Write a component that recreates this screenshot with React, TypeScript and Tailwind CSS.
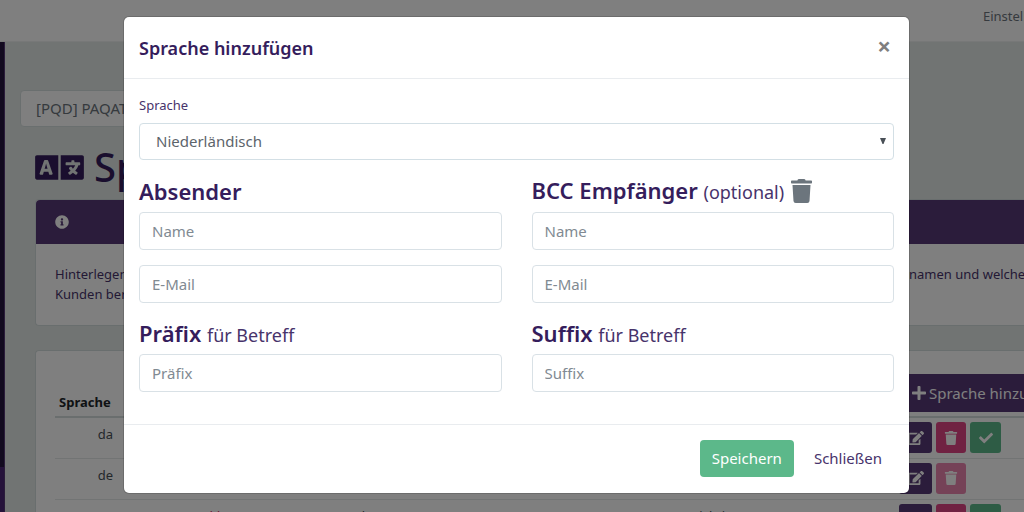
import React, { useState } from 'react';
import { FaCheck, FaEdit, FaInfoCircle, FaLanguage, FaPlus, FaTrash } from 'react-icons/fa';

interface LanguageRow {
  code: string;
  marker?: string;
  sender?: string;
  prefix?: string;
  locked?: boolean;
}

interface FieldProps {
  id: string;
  placeholder: string;
  type?: string;
}

const rows: LanguageRow[] = [
  { code: 'da' },
  { code: 'de', locked: true },
  { code: 'en', marker: '**', sender: 'PAQATO sample Contact', prefix: '[Wichtig]' },
];

const Field: React.FC<FieldProps> = ({ id, placeholder, type = 'text' }) => (
  <input id={id} type={type} placeholder={placeholder} aria-label={placeholder}
    className="block w-full h-[38px] px-3 rounded border border-[#d9e1e6] bg-white text-[15px] text-[#495057] placeholder:text-[#818a92] outline-none" />
);

const LanguageTable: React.FC = () => (
  <table className="w-full table-fixed border-collapse text-[13px] leading-5 text-[#495057]">
    <colgroup>
      <col className="w-[64px]" />
      <col className="w-[152px]" />
      <col className="w-[408px]" />
      <col />
      <col className="w-[125px]" />
    </colgroup>
    <thead>
      <tr className="border-b-2 border-[#d5dcdc] h-12">
        <th className="px-1 pb-1 align-bottom text-left font-bold text-[#212529]">Sprache</th>
        <th />
        <th />
        <th />
        <th className="py-1 font-normal">
          <button className="flex items-center gap-0.5 w-[200px] h-[38px] pl-3 rounded bg-[#563876] text-[15px] text-white whitespace-nowrap">
            <FaPlus className="text-base" /> Sprache hinzufügen
          </button>
        </th>
      </tr>
    </thead>
    <tbody>
      {rows.map(r => (
        <tr key={r.code} className="border-b border-[#e4e8e8] h-[41px]">
          <td className="pt-1.5 pr-1.5 align-top text-right">{r.code}</td>
          <td className="pt-1.5 pl-10 align-top text-center text-[#d6336c]">{r.marker}</td>
          <td className="pt-1.5 pl-1 align-top">{r.sender}</td>
          <td className="pt-1.5 pl-1 align-top">{r.prefix}</td>
          <td className="pt-1 align-top">
            <div className="flex gap-1">
              <button aria-label="Bearbeiten" className="flex items-center justify-center w-[33px] h-[31px] rounded-[3px] bg-[#563876] text-white">
                <FaEdit className="text-base" />
              </button>
              <button aria-label="Löschen" disabled={r.locked}
                className={`flex items-center justify-center w-[30px] h-[31px] rounded-[3px] bg-[#e04484] text-white ${r.locked ? 'opacity-65' : ''}`}>
                <FaTrash className="text-sm" />
              </button>
              {!r.locked && (
                <button aria-label="Aktivieren" className="flex items-center justify-center w-[31px] h-[31px] rounded-[3px] bg-[#5cb88a] text-white">
                  <FaCheck className="text-sm" />
                </button>
              )}
            </div>
          </td>
        </tr>
      ))}
    </tbody>
  </table>
);

const SettingsPage: React.FC = () => (
  <div className="flex flex-col h-full">
    <header className="flex justify-end h-[42px] shrink-0 border-b border-[#eef0f0] bg-white">
      <a href="#einstellungen" className="w-[41px] pt-1.5 text-[13px] leading-5 text-[#6c757d] whitespace-nowrap">Einstellungen</a>
    </header>
    <div className="flex flex-1 min-h-0">
      <aside className="flex flex-col w-[5px] shrink-0 border-r border-[#563876] bg-[#24143f]">
        <div className="mt-auto h-[45px] bg-[#4a2474]" />
      </aside>
      <main className="flex-1 min-w-0 pt-12 pl-[15px]">
        <button className="flex items-center w-60 h-[37px] px-[15px] rounded border border-[#d5dfdf] bg-white text-[15px] text-[#6c757d]">
          [PQD] PAQATO
        </button>
        <div className="pl-[15px]">
          <h1 className="flex items-center gap-2.5 h-[72px] pt-2 text-[40px] font-medium text-[#351d5c]">
            <FaLanguage className="w-[49px] h-[39px]" /> Sprachen
          </h1>
          <section className="rounded-l border border-r-0 border-[#d3dcdc] bg-white">
            <div className="flex items-center h-11 px-[19px] rounded-tl bg-[#563876] text-white">
              <FaInfoCircle className="text-sm" />
            </div>
            <div className="h-[81px] px-[19px] pt-5 text-[13px] leading-5 text-[#47336b]">
              <p className="flex justify-between whitespace-nowrap">
                <span>Hinterlegen</span>
                <span className="w-24">namen und welchen</span>
              </p>
              <p>Kunden bereits</p>
            </div>
          </section>
          <section className="mt-6 rounded-l border border-r-0 border-[#d3dcdc] bg-white pl-[19px] pt-[18px]">
            <LanguageTable />
          </section>
        </div>
      </main>
    </div>
  </div>
);

const LanguageDialog: React.FC = () => {
  const [language, setLanguage] = useState('nl');

  return (
    <div role="dialog" aria-labelledby="dialog-title"
      className="w-full rounded-[5px] bg-white text-[#351d5c] shadow-[0_0_0_1px_rgba(0,0,0,0.15)]">
      <header className="flex items-start justify-between h-[62px] px-[15px] pt-4 border-b border-[#e9ecef]">
        <h2 id="dialog-title" className="text-lg leading-[30px] font-semibold">Sprache hinzufügen</h2>
        <button aria-label="Schließen" className="w-5 text-2xl leading-[26px] font-bold text-[#7f7f7f]">×</button>
      </header>

      <form className="px-[15px] pt-4 pb-8" onSubmit={e => e.preventDefault()}>
        <label htmlFor="language" className="block h-7 text-[13px] leading-5 text-[#47336b]">Sprache</label>
        <div className="relative">
          <select id="language" value={language} onChange={e => setLanguage(e.target.value)}
            className="block appearance-none w-full h-[37px] px-4 rounded border border-[#d3dfe5] bg-white text-[15px] text-[#5c646b] outline-none">
            <option value="nl">Niederländisch</option>
            <option value="fr">Französisch</option>
          </select>
          <svg viewBox="0 0 6 6" className="absolute right-2 top-[15px] w-1.5 h-1.5 pointer-events-none" fill="#495057">
            <path d="M0 0h6L3.5 6h-1z" />
          </svg>
        </div>

        <div className="grid grid-cols-2 gap-x-[30px] mt-4">
          <fieldset>
            <legend className="h-9 text-[22px] leading-[30px] font-semibold">Absender</legend>
            <div className="flex flex-col gap-[15px]">
              <Field id="sender-name" placeholder="Name" />
              <Field id="sender-mail" placeholder="E-Mail" type="email" />
            </div>
          </fieldset>
          <fieldset>
            <legend className="flex items-center gap-[7px] h-9 pb-1.5 text-[22px] leading-[30px] font-semibold">
              <span>BCC Empfänger <small className="text-lg leading-[30px] font-normal text-[#47336b]">(optional)</small></span>
              <button type="button" aria-label="Entfernen"><FaTrash className="w-[21px] h-6 text-[#6c757d]" /></button>
            </legend>
            <div className="flex flex-col gap-[15px]">
              <Field id="bcc-name" placeholder="Name" />
              <Field id="bcc-mail" placeholder="E-Mail" type="email" />
            </div>
          </fieldset>
        </div>

        <div className="grid grid-cols-2 gap-x-[30px] mt-[15px]">
          <div>
            <label htmlFor="prefix" className="block h-9 text-[22px] leading-[30px] font-semibold">
              Präfix <small className="text-lg leading-[30px] font-normal text-[#47336b]">für Betreff</small>
            </label>
            <Field id="prefix" placeholder="Präfix" />
          </div>
          <div>
            <label htmlFor="suffix" className="block h-9 text-[22px] leading-[30px] font-semibold">
              Suffix <small className="text-lg leading-[30px] font-normal text-[#47336b]">für Betreff</small>
            </label>
            <Field id="suffix" placeholder="Suffix" />
          </div>
        </div>
      </form>

      <footer className="flex justify-end gap-2 px-[15px] pt-[15px] pb-4 border-t border-[#e9ecef]">
        <button className="h-[37px] px-3 rounded bg-[#5cb88a] text-[15px] text-white">Speichern</button>
        <button className="h-[37px] px-3 rounded text-[15px] text-[#47336b]">Schließen</button>
      </footer>
    </div>
  );
};

const App: React.FC = () => (
  <div className="relative h-screen overflow-hidden bg-[#e3e8e6] font-['Noto_Sans',sans-serif]">
    <SettingsPage />
    <div className="absolute inset-0 flex items-start pt-[17px] pl-[124px] pr-[115px] bg-black/50">
      <LanguageDialog />
    </div>
  </div>
);

export default App;
